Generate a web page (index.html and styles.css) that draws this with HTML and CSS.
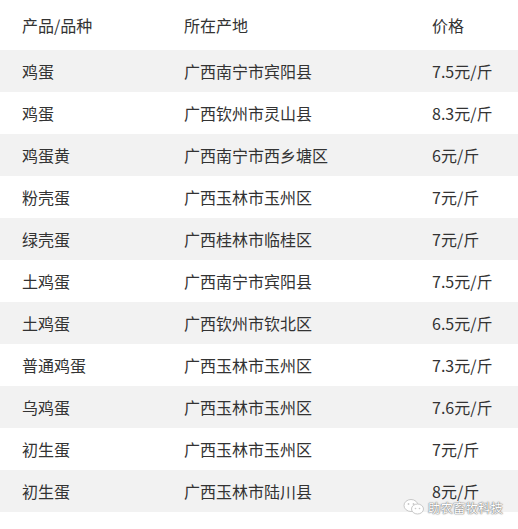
FILE: index.html
```html
<!DOCTYPE html>
<html lang="zh-CN">
<head>
<meta charset="utf-8">
<link rel="stylesheet" href="styles.css">
</head>
<body>
<div class="page">
  <div class="table">
    <div class="row head"><span>产品/品种</span><span>所在产地</span><span>价格</span></div>
    <div class="row alt"><span>鸡蛋</span><span>广西南宁市宾阳县</span><span>7.5元/斤</span></div>
    <div class="row"><span>鸡蛋</span><span>广西钦州市灵山县</span><span>8.3元/斤</span></div>
    <div class="row alt"><span>鸡蛋黄</span><span>广西南宁市西乡塘区</span><span>6元/斤</span></div>
    <div class="row"><span>粉壳蛋</span><span>广西玉林市玉州区</span><span>7元/斤</span></div>
    <div class="row alt"><span>绿壳蛋</span><span>广西桂林市临桂区</span><span>7元/斤</span></div>
    <div class="row"><span>土鸡蛋</span><span>广西南宁市宾阳县</span><span>7.5元/斤</span></div>
    <div class="row alt"><span>土鸡蛋</span><span>广西钦州市钦北区</span><span>6.5元/斤</span></div>
    <div class="row"><span>普通鸡蛋</span><span>广西玉林市玉州区</span><span>7.3元/斤</span></div>
    <div class="row alt"><span>乌鸡蛋</span><span>广西玉林市玉州区</span><span>7.6元/斤</span></div>
    <div class="row"><span>初生蛋</span><span>广西玉林市玉州区</span><span>7元/斤</span></div>
    <div class="row alt"><span>初生蛋</span><span>广西玉林市陆川县</span><span>8元/斤</span></div>
  </div>
  <div class="watermark">
    <svg class="wm-icon" width="22" height="18" viewBox="0 0 22 18">
      <ellipse cx="8" cy="7.5" rx="7" ry="6" fill="#fff" stroke="#c8c8c8" stroke-width="1"/>
      <ellipse cx="14.5" cy="11" rx="6" ry="5" fill="#fff" stroke="#c8c8c8" stroke-width="1"/>
      <circle cx="5.5" cy="6" r="0.9" fill="#c8c8c8"/>
      <circle cx="10.5" cy="6" r="0.9" fill="#c8c8c8"/>
      <circle cx="12.5" cy="10.5" r="0.8" fill="#c8c8c8"/>
      <circle cx="16.5" cy="10.5" r="0.8" fill="#c8c8c8"/>
    </svg>
    <span class="wm-text">助农畜牧科技</span>
  </div>
</div>
</body>
</html>
```

FILE: styles.css
```css
html, body {
  margin: 0;
  padding: 0;
  background: #fff;
}
.page {
  position: relative;
  width: 518px;
  height: 529px;
  font-family: "Noto Sans CJK SC", "Microsoft YaHei", sans-serif;
  color: #333;
  font-size: 16px;
}
.table {
  display: flex;
  flex-direction: column;
}
.row {
  display: grid;
  grid-template-columns: 162px 248px 1fr;
  padding-left: 22px;
  height: 42px;
  align-items: center;
  line-height: 16px;
}
.row.head {
  height: 50px;
}
.row.alt {
  background: #f2f2f2;
}
.watermark {
  position: absolute;
  left: 403px;
  top: 498px;
  display: flex;
  align-items: center;
  gap: 3px;
}
.wm-text {
  font-size: 12.5px;
  color: #fff;
  line-height: 12px;
  padding-top: 1px;
  text-shadow: 0 0 1px #777, 0 0 1px #777, 0 0 2px #999;
}
```
